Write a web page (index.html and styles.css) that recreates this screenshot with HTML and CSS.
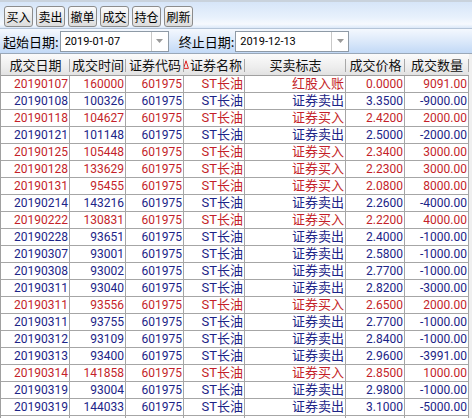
FILE: index.html
```html
<!DOCTYPE html>
<html>
<head>
<meta charset="utf-8">
<link rel="stylesheet" href="styles.css">
</head>
<body>
<div class="app">
  <div class="toolbar">
    <button class="btn">买入</button>
    <button class="btn">卖出</button>
    <button class="btn">撤单</button>
    <button class="btn">成交</button>
    <button class="btn">持仓</button>
    <button class="btn">刷新</button>
  </div>
  <div class="filter">
    <span class="label">起始日期:</span>
    <div class="combo combo-start"><span class="combo-text">2019-01-07</span><span class="combo-btn"><svg width="7" height="4" viewBox="0 0 7 4"><path d="M0 0H7L3.5 4Z" fill="#9a9a9a"/></svg></span></div>
    <span class="label label-end">终止日期:</span>
    <div class="combo combo-end"><span class="combo-text">2019-12-13</span><span class="combo-btn"><svg width="7" height="4" viewBox="0 0 7 4"><path d="M0 0H7L3.5 4Z" fill="#9a9a9a"/></svg></span></div>
  </div>
  <div class="grid">
    <div class="head">成交日期</div>
    <div class="head">成交时间</div>
    <div class="head">证券代码</div>
    <div class="head head-sort"><svg class="sort" width="6" height="9" viewBox="0 0 6 9"><path d="M3 0.8L0.6 8.4H5.4Z" fill="none" stroke="#d22" stroke-width="1"/></svg>证券名称</div>
    <div class="head">买卖标志</div>
    <div class="head">成交价格</div>
    <div class="head">成交数量</div>

    <div class="c r">20190107</div><div class="c r">160000</div><div class="c r">601975</div><div class="c t r">ST长油</div><div class="c t r">红股入账</div><div class="c r">0.0000</div><div class="c r">9091.00</div>
    <div class="c b">20190108</div><div class="c b">100326</div><div class="c b">601975</div><div class="c t b">ST长油</div><div class="c t b">证券卖出</div><div class="c b">3.3500</div><div class="c b">-9000.00</div>
    <div class="c r">20190118</div><div class="c r">104627</div><div class="c r">601975</div><div class="c t r">ST长油</div><div class="c t r">证券买入</div><div class="c r">2.4200</div><div class="c r">2000.00</div>
    <div class="c b">20190121</div><div class="c b">101148</div><div class="c b">601975</div><div class="c t b">ST长油</div><div class="c t b">证券卖出</div><div class="c b">2.5000</div><div class="c b">-2000.00</div>
    <div class="c r">20190125</div><div class="c r">105448</div><div class="c r">601975</div><div class="c t r">ST长油</div><div class="c t r">证券买入</div><div class="c r">2.3400</div><div class="c r">3000.00</div>
    <div class="c r">20190128</div><div class="c r">133629</div><div class="c r">601975</div><div class="c t r">ST长油</div><div class="c t r">证券买入</div><div class="c r">2.2300</div><div class="c r">3000.00</div>
    <div class="c r">20190131</div><div class="c r">95455</div><div class="c r">601975</div><div class="c t r">ST长油</div><div class="c t r">证券买入</div><div class="c r">2.0800</div><div class="c r">8000.00</div>
    <div class="c b">20190214</div><div class="c b">143216</div><div class="c b">601975</div><div class="c t b">ST长油</div><div class="c t b">证券卖出</div><div class="c b">2.2600</div><div class="c b">-4000.00</div>
    <div class="c r">20190222</div><div class="c r">130831</div><div class="c r">601975</div><div class="c t r">ST长油</div><div class="c t r">证券买入</div><div class="c r">2.2200</div><div class="c r">4000.00</div>
    <div class="c b">20190228</div><div class="c b">93651</div><div class="c b">601975</div><div class="c t b">ST长油</div><div class="c t b">证券卖出</div><div class="c b">2.4000</div><div class="c b">-1000.00</div>
    <div class="c b">20190307</div><div class="c b">93001</div><div class="c b">601975</div><div class="c t b">ST长油</div><div class="c t b">证券卖出</div><div class="c b">2.5800</div><div class="c b">-1000.00</div>
    <div class="c b">20190308</div><div class="c b">93002</div><div class="c b">601975</div><div class="c t b">ST长油</div><div class="c t b">证券卖出</div><div class="c b">2.7700</div><div class="c b">-1000.00</div>
    <div class="c b">20190311</div><div class="c b">93040</div><div class="c b">601975</div><div class="c t b">ST长油</div><div class="c t b">证券卖出</div><div class="c b">2.8200</div><div class="c b">-3000.00</div>
    <div class="c r">20190311</div><div class="c r">93556</div><div class="c r">601975</div><div class="c t r">ST长油</div><div class="c t r">证券买入</div><div class="c r">2.6500</div><div class="c r">2000.00</div>
    <div class="c b">20190311</div><div class="c b">93755</div><div class="c b">601975</div><div class="c t b">ST长油</div><div class="c t b">证券卖出</div><div class="c b">2.7700</div><div class="c b">-1000.00</div>
    <div class="c b">20190312</div><div class="c b">93109</div><div class="c b">601975</div><div class="c t b">ST长油</div><div class="c t b">证券卖出</div><div class="c b">2.8400</div><div class="c b">-1000.00</div>
    <div class="c b">20190313</div><div class="c b">93400</div><div class="c b">601975</div><div class="c t b">ST长油</div><div class="c t b">证券卖出</div><div class="c b">2.9600</div><div class="c b">-3991.00</div>
    <div class="c r">20190314</div><div class="c r">141858</div><div class="c r">601975</div><div class="c t r">ST长油</div><div class="c t r">证券买入</div><div class="c r">2.8500</div><div class="c r">1000.00</div>
    <div class="c b">20190319</div><div class="c b">93004</div><div class="c b">601975</div><div class="c t b">ST长油</div><div class="c t b">证券卖出</div><div class="c b">2.9800</div><div class="c b">-1000.00</div>
    <div class="c b">20190319</div><div class="c b">144033</div><div class="c b">601975</div><div class="c t b">ST长油</div><div class="c t b">证券卖出</div><div class="c b">3.1000</div><div class="c b">-5000.00</div>
    <div class="c"></div><div class="c"></div><div class="c"></div><div class="c"></div><div class="c"></div><div class="c"></div><div class="c"></div>
  </div>
</div>
</body>
</html>
```
FILE: styles.css
```css
* { box-sizing: border-box; }
html, body {
  margin: 0;
  padding: 0;
  width: 472px;
  height: 418px;
  overflow: hidden;
  background: #f0f0f0;
  font-family: "Noto Sans CJK SC", "Noto Sans", sans-serif;
}
.app {
  width: 472px;
  height: 418px;
  overflow: hidden;
  display: flex;
  flex-direction: column;
}
.toolbar {
  height: 29px;
  flex: none;
  border-top: 2px solid #c9d2dc;
  border-bottom: 1px solid #b4c4d8;
  background: linear-gradient(#d6e5f8, #e8f1fc 60%, #f6f9fe 85%, #dbe8f8);
  display: flex;
  align-items: flex-start;
  gap: 3px;
  padding: 4px 0 0 4px;
}
.btn {
  width: 29px;
  height: 21px;
  padding: 0;
  margin: 0;
  border: 1px solid #8c8c8c;
  border-radius: 3px;
  background: linear-gradient(#fbfbfb, #ececec 50%, #dcdcdc);
  font-family: "Noto Sans CJK SC", sans-serif;
  font-size: 12px;
  line-height: 19px;
  color: #000;
}
.filter {
  height: 25px;
  flex: none;
  border-bottom: 1px solid #9aa8b8;
  background: linear-gradient(#f4f8fe, #dce9fa 50%, #c2d9f6);
  display: flex;
  align-items: center;
  padding-left: 3px;
  white-space: nowrap;
}
.label {
  font-size: 13px;
  color: #000;
  line-height: 19px;
  margin-right: 1px;
}
.label-end {
  margin-left: 10px;
}
.combo {
  height: 21px;
  border: 1px solid #8e9aa6;
  background: #fff;
  display: flex;
  align-items: stretch;
}
.combo-start { width: 109px; }
.combo-end { width: 114px; }
.combo-text {
  flex: 1;
  font-family: Roboto, "Noto Sans CJK SC", sans-serif;
  font-size: 11px;
  line-height: 19px;
  padding-left: 4px;
  color: #000;
}
.combo-btn {
  width: 17px;
  border-left: 1px solid #c8c8c8;
  background: #fff;
  display: flex;
  align-items: center;
  justify-content: center;
}
.grid {
  flex: 1;
  display: grid;
  grid-template-columns: 69px 56px 58px 61px 101px 59px 64px;
  grid-auto-rows: 17px;
  grid-template-rows: 22px;
  align-content: start;
  width: 468px;
  background: #fff;
  border-left: 1px solid #a0a0a0;
}
.head {
  background:
    linear-gradient(#a8a8a8, #a8a8a8) right 5px / 1px 13px no-repeat,
    linear-gradient(#fbfbfb, #eeeeee 60%, #e2e2e2);
  border-bottom: 1px solid #a0a0a0;
  font-size: 13px;
  line-height: 21px;
  text-align: center;
  color: #111;
  white-space: nowrap;
  overflow: hidden;
}
.head-sort {
  display: flex;
  align-items: center;
  justify-content: flex-end;
  padding-right: 3px;
}
.sort {
  flex: none;
  margin-right: 1px;
}
.c {
  border-right: 1px solid #a6a6a6;
  border-bottom: 1px solid #a6a6a6;
  font-family: Roboto, "Noto Sans CJK SC", sans-serif;
  font-size: 12px;
  line-height: 16px;
  text-align: right;
  padding-right: 1px;
  white-space: nowrap;
  overflow: hidden;
}
.t {
  font-size: 13px;
}
.r { color: #c41f2a; }
.b { color: #1c2487; }
```
